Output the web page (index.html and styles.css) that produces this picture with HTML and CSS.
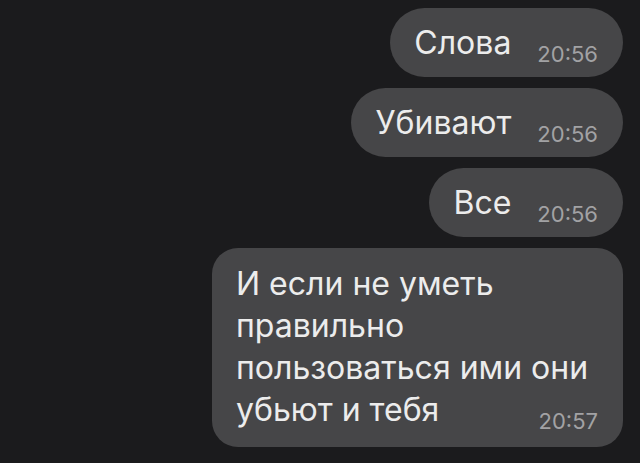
FILE: index.html
```html
<html>
<head>
<meta charset="UTF-8">
<title>Chat</title>
<link rel="stylesheet" href="styles.css">
</head>
<body>

<div class="Chat">
  <div class="Msg"><span class="Text">Слова</span><span class="Time">20:56</span></div>
  <div class="Msg"><span class="Text">Убивают</span><span class="Time">20:56</span></div>
  <div class="Msg"><span class="Text">Все</span><span class="Time">20:56</span></div>
  <div class="Msg Long">И если не уметь правильно пользоваться ими они убьют и тебя<span class="Time">20:57</span></div>
</div>

</body>
</html>
```

FILE: styles.css
```css
body{
   margin:0;
   background:#1b1b1d;
   font-family:Inter, "Noto Sans", sans-serif;
   -webkit-font-smoothing: antialiased;
}
.Chat{
   display:flex;
   flex-direction:column;
   align-items:flex-end;
   gap:11px;
   padding:8px 17px 0 0;
}
.Msg{
   display:flow-root;
   max-width:411px;
   box-sizing:border-box;
   padding:14px 25px 13px 24px;
   background:#464648;
   border-radius:35px;
   color:#ececec;
   font-size:32px;
   line-height:42px;
}
.Msg.Long{
   border-radius:26px;
   padding-top:15px;
   padding-bottom:16px;
}
.Time{
   float:right;
   margin:22px 0 0 26px;
   font-size:22px;
   line-height:20px;
   color:#a2a2a4;
}
```
